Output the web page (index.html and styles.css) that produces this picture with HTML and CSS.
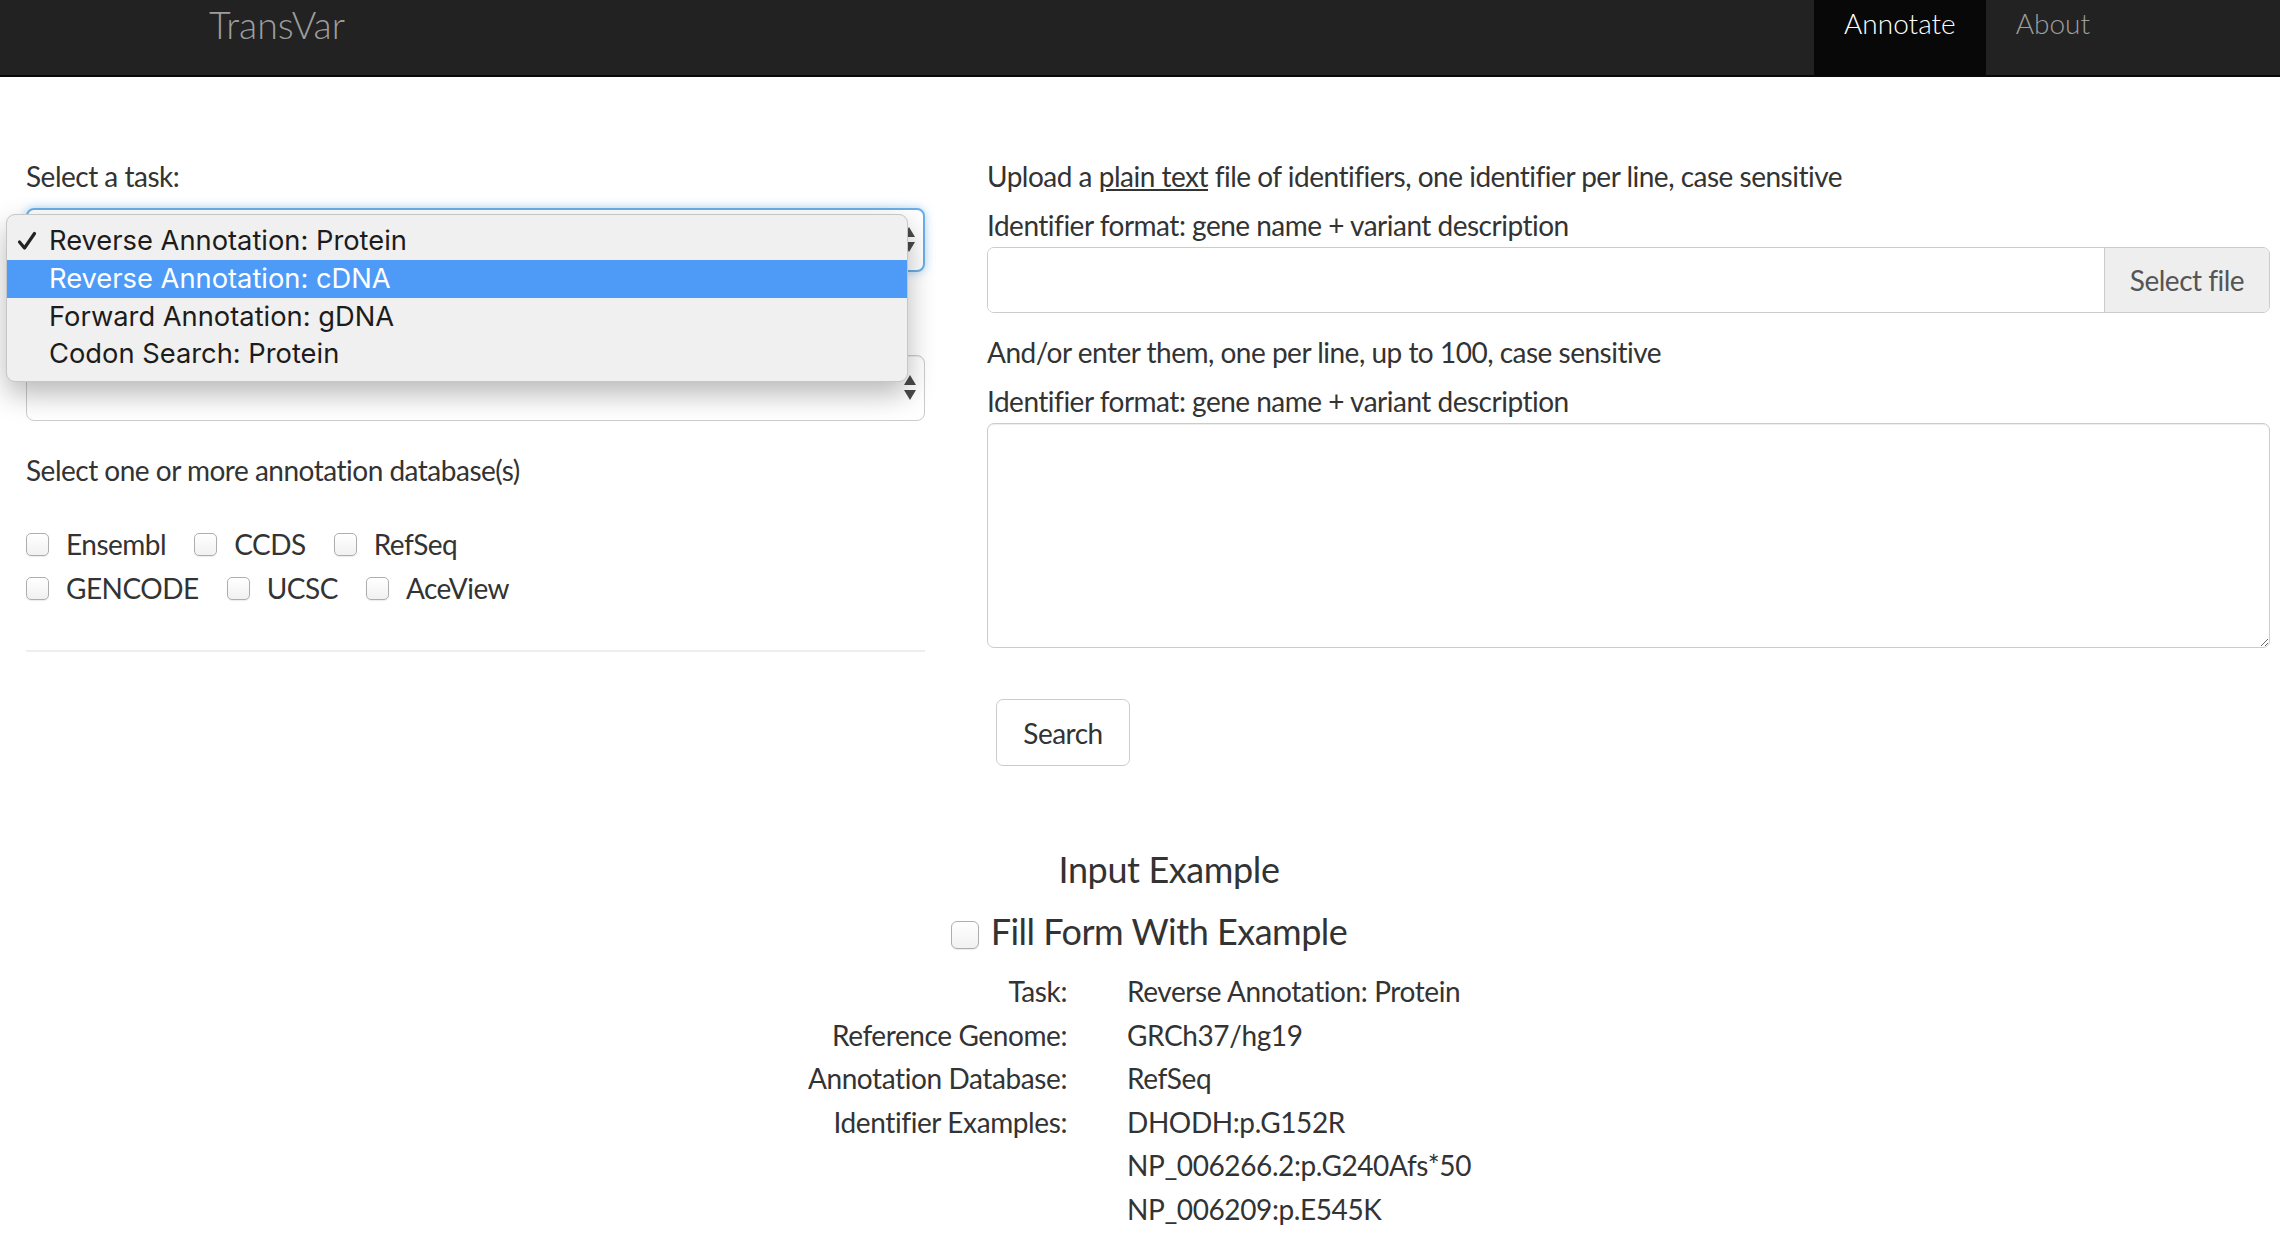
FILE: index.html
```html
<!DOCTYPE html>
<html lang="en">
<head>
<meta charset="utf-8">
<title>TransVar</title>
<link rel="stylesheet" href="styles.css">
</head>
<body>
<nav class="navbar">
  <div class="brand">TransVar</div>
  <ul class="nav">
    <li class="nav-item active">Annotate</li>
    <li class="nav-item">About</li>
  </ul>
</nav>

<main class="main">
  <div class="form-row">
    <div class="col-left">
      <div class="form-group">
        <p class="label task-label">Select a task:</p>
        <div class="select focused">
          <span class="arrows"><svg width="12" height="26" viewBox="0 0 12 26"><polygon points="6,0 12,10 0,10" fill="#4a4a4a"/><polygon points="0,15 12,15 6,25" fill="#4a4a4a"/></svg></span>
          <div class="popup">
            <div class="option"><span class="check"><svg width="20" height="20" viewBox="0 0 20 20"><path d="M2.5 11 L7.5 17 L17.5 2.5" fill="none" stroke="#222" stroke-width="3.2" stroke-linecap="round" stroke-linejoin="round"/></svg></span>Reverse Annotation: Protein</div>
            <div class="option selected">Reverse Annotation: cDNA</div>
            <div class="option">Forward Annotation: gDNA</div>
            <div class="option">Codon Search: Protein</div>
          </div>
        </div>
      </div>
      <div class="form-group second-group">
        <p class="label task-label covered">Select a reference genome:</p>
        <div class="select second">
          <span class="arrows"><svg width="12" height="26" viewBox="0 0 12 26"><polygon points="6,0 12,10 0,10" fill="#4a4a4a"/><polygon points="0,15 12,15 6,25" fill="#4a4a4a"/></svg></span>
        </div>
      </div>
      <p class="label">Select one or more annotation database(s)</p>
      <div class="checkboxes">
        <div class="cb-row">
          <label class="cb-item"><span class="checkbox"></span>Ensembl</label>
          <label class="cb-item"><span class="checkbox"></span>CCDS</label>
          <label class="cb-item"><span class="checkbox"></span>RefSeq</label>
        </div>
        <div class="cb-row">
          <label class="cb-item"><span class="checkbox"></span>GENCODE</label>
          <label class="cb-item"><span class="checkbox"></span>UCSC</label>
          <label class="cb-item"><span class="checkbox"></span>AceView</label>
        </div>
      </div>
      <hr class="divider">
    </div>

    <div class="col-right">
      <p class="label upload">Upload a <a class="link">plain text</a> file of identifiers, one identifier per line, case sensitive</p>
      <p class="label format">Identifier format: gene name + variant description</p>
      <div class="file-group">
        <div class="file-input"></div>
        <span class="file-btn">Select file</span>
      </div>
      <p class="label andor">And/or enter them, one per line, up to 100, case sensitive</p>
      <p class="label format">Identifier format: gene name + variant description</p>
      <textarea class="ids"></textarea>
      <button class="search-btn" type="button">Search</button>
    </div>
  </div>

  <section class="example">
    <h3 class="ex-title">Input Example</h3>
    <label class="fill"><span class="checkbox big"></span>Fill Form With Example</label>
    <div class="ex-table">
      <div class="ex-key">Task:</div><div class="ex-val">Reverse Annotation: Protein</div>
      <div class="ex-key">Reference Genome:</div><div class="ex-val">GRCh37/hg19</div>
      <div class="ex-key">Annotation Database:</div><div class="ex-val">RefSeq</div>
      <div class="ex-key">Identifier Examples:</div><div class="ex-val">DHODH:p.G152R</div>
      <div class="ex-key"></div><div class="ex-val">NP_006266.2:p.G240Afs*50</div>
      <div class="ex-key"></div><div class="ex-val">NP_006209:p.E545K</div>
    </div>
  </section>
</main>
</body>
</html>
```

FILE: styles.css
```css
* { box-sizing: border-box; }

body {
  margin: 0;
  font-family: Lato, "Liberation Sans", sans-serif;
  color: #333;
  background: #fff;
  letter-spacing: -0.5px;
}

/* navbar */
.navbar {
  height: 77px;
  background: #222;
  border-bottom: 2px solid #080808;
  display: flex;
  align-items: flex-start;
  letter-spacing: 0;
}
.brand {
  margin-left: 209px;
  font-size: 37.5px;
  font-weight: 300;
  line-height: 49px;
  color: #9d9d9d;
}
.nav {
  display: flex;
  list-style: none;
  margin: 0 160px 0 auto;
  padding: 0;
  height: 75px;
}
.nav-item {
  padding: 6px 30px 0;
  font-size: 28px;
  font-weight: 300;
  line-height: 35px;
  color: #9d9d9d;
}
.nav-item.active {
  background: #080808;
  color: #fff;
}

/* form */
.form-row {
  display: grid;
  grid-template-columns: 899px 1283px;
  column-gap: 62px;
  padding: 79px 0 0 26px;
}
.label {
  margin: 0;
  font-size: 28px;
  line-height: 40px;
}
.form-group { margin-bottom: 31px; }
.form-group.second-group { margin-bottom: 29px; }
.task-label { margin-bottom: 12px; }
.covered { visibility: hidden; }

.select {
  position: relative;
  height: 64px;
  border: 1px solid #ccc;
  border-radius: 8px;
  background: #fff;
  box-shadow: inset 0 1px 1px rgba(0,0,0,.075);
}
.select.second { height: 66px; }
.select.focused {
  border: 2px solid #6aaeea;
  box-shadow: 0 0 10px rgba(102,175,233,.55);
}
.arrows {
  position: absolute;
  right: 8px;
  top: 50%;
  transform: translateY(-50%);
  display: flex;
}
.popup {
  position: absolute;
  left: -22px;
  top: 4px;
  width: 902px;
  padding: 7px 0 8px;
  background: #f0f0f0;
  border: 1px solid #c6c6c6;
  border-radius: 9px;
  box-shadow: 0 12px 28px rgba(0,0,0,.28);
  z-index: 5;
  font-family: Inter, Roboto, sans-serif;
  font-size: 27.3px;
  letter-spacing: 0;
  color: #1c1c1c;
}
.option {
  position: relative;
  height: 37.8px;
  line-height: 37.8px;
  padding-left: 42px;
}
.option.selected {
  background: #4d9bf7;
  color: #fff;
}
.check {
  position: absolute;
  left: 10px;
  top: 9px;
  display: flex;
}

.checkboxes { margin-top: 32px; }
.cb-row {
  display: flex;
  align-items: center;
  height: 44px;
}
.cb-item {
  display: flex;
  align-items: center;
  gap: 17px;
  margin-right: 28px;
  font-size: 28px;
}
.checkbox {
  display: inline-block;
  width: 23px;
  height: 23px;
  border: 1px solid #aeaeae;
  border-radius: 5px;
  background: linear-gradient(#fff, #f1f1f1);
  box-shadow: 0 1px 1px rgba(0,0,0,.08);
}
.checkbox.big {
  width: 28px;
  height: 28px;
  border-radius: 6px;
  margin-top: 12px;
}
.divider {
  margin: 40px 0 0;
  border: 0;
  border-top: 2px solid #eee;
}

.upload { margin-bottom: 9px; }
.link { color: #333; text-decoration: underline; }
.format { margin-bottom: 2px; }
.file-group {
  display: flex;
  height: 66px;
  border: 1px solid #ccc;
  border-radius: 7px;
  overflow: hidden;
  box-shadow: inset 0 1px 1px rgba(0,0,0,.075);
}
.file-input { flex: 1; background: #fff; }
.file-btn {
  width: 165px;
  background: #eee;
  border-left: 1px solid #ccc;
  color: #555;
  font-size: 28px;
  display: flex;
  align-items: center;
  justify-content: center;
}
.andor { margin-top: 19px; margin-bottom: 9px; }
.ids {
  display: block;
  width: 100%;
  height: 225px;
  border: 1px solid #ccc;
  border-radius: 7px;
  box-shadow: inset 0 1px 1px rgba(0,0,0,.075);
  resize: vertical;
  font: inherit;
}
.search-btn {
  display: block;
  margin: 51px 0 0 9px;
  width: 134px;
  height: 67px;
  border: 1px solid #ccc;
  border-radius: 7px;
  background: #fff;
  color: #333;
  font-family: Lato, "Liberation Sans", sans-serif;
  font-size: 28px;
  letter-spacing: -0.5px;
}

/* example */
.example {
  margin-top: 78px;
  padding-left: 58px;
  display: flex;
  flex-direction: column;
  align-items: center;
}
.ex-title {
  margin: 0;
  font-size: 36px;
  font-weight: 400;
  letter-spacing: -0.4px;
  line-height: 50px;
}
.fill {
  margin: 15px 40px 0 0;
  display: flex;
  align-items: flex-start;
  gap: 12px;
  font-size: 36px;
  line-height: 44px;
}
.ex-table {
  align-self: stretch;
  display: grid;
  grid-template-columns: 1009px 1fr;
  column-gap: 60px;
  margin-top: 17px;
  font-size: 28px;
  letter-spacing: -0.4px;
  line-height: 43.6px;
}
.ex-key { text-align: right; }
```
